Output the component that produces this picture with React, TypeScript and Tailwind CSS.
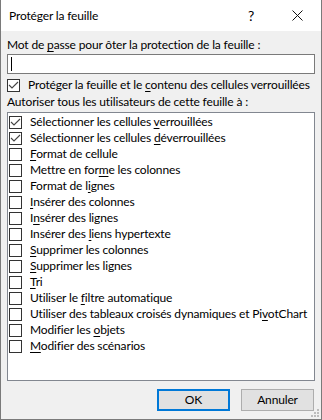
import type { ReactNode } from "react";

type Item = { label: ReactNode; checked?: boolean };

// lettre soulignée (raccourci clavier)
const U = ({ children }: { children: ReactNode }) => <span className="underline underline-offset-[2px]">{children}</span>;

const items: Item[] = [
	{ label: <>Sélectionner les cellules <U>v</U>errouillées</>, checked: true },
	{ label: <>Sélectionner les cellules <U>d</U>éverrouillées</>, checked: true },
	{ label: <><U>F</U>ormat de cellule</> },
	{ label: <>Mettre en for<U>m</U>e les colonnes</> },
	{ label: <>Format de l<U>i</U>gnes</> },
	{ label: <><U>I</U>nsérer des colonnes</> },
	{ label: <>I<U>n</U>sérer des lignes</> },
	{ label: <>Insérer des <U>l</U>iens hypertexte</> },
	{ label: <><U>S</U>upprimer les colonnes</> },
	{ label: <><U>S</U>upprimer les lignes</> },
	{ label: <><U>T</U>ri</> },
	{ label: <>Utiliser le <U>f</U>iltre automatique</> },
	{ label: <>Utiliser des tableaux croisés dynamiques et Pi<U>v</U>otChart</> },
	{ label: <>Modifier les <U>o</U>bjets</> },
	{ label: <><U>M</U>odifier des scénarios</> },
];

function Checkbox({ checked }: { checked?: boolean }) {
	return (
		<span className="flex size-[13px] shrink-0 items-center justify-center border border-[#333333] bg-white">
			{checked && (
				<svg width="11" height="11" viewBox="0 0 11 11">
					<polyline points="1,5 4,8 10,2" fill="none" stroke="#444" strokeWidth="1.1" />
				</svg>
			)}
		</span>
	);
}

export default function App() {
	return (
		<div className="relative flex h-[420px] w-[322px] flex-col overflow-hidden border-x border-b border-[#7a7a7a] bg-[#f0f0f0] font-['Lato',sans-serif] text-[12px] leading-[16px] tracking-[-0.15px] text-black">
			{/* barre de titre */}
			<div className="flex h-[31px] shrink-0 items-center bg-white pl-[8px]">
				<span className="flex-1">Protéger la feuille</span>
				<span className="mr-[38px] text-[14px]">?</span>
				<svg width="11" height="11" viewBox="0 0 11 11" className="mr-[18px]">
					<path d="M0.5 0.5 L10.5 10.5 M10.5 0.5 L0.5 10.5" stroke="#111" strokeWidth="1" />
				</svg>
			</div>

			<div className="flex flex-1 flex-col whitespace-nowrap px-[6px]">
				<p className="mt-[6px]">
					Mot de <U>p</U>asse pour ôter la protection de la feuille :
				</p>
				<div className="mt-[1px] flex h-[20px] shrink-0 items-center border border-[#7a7a7a] bg-white pl-[3px]">
					<span className="h-[14px] w-px bg-black" />
				</div>

				<label className="mt-[3px] flex items-center gap-[8px]">
					<Checkbox checked />
					<span>
						Protéger la feuille et le <U>c</U>ontenu des cellules verrouillées
					</span>
				</label>
				<p className="mt-[1px]">Autoriser tous les utilisateurs de cette feuille à :</p>

				<div className="mt-[2px] h-[269px] shrink-0 border border-[#828790] bg-white pl-[1px] pt-[1px]">
					{items.map((item, i) => (
						<label key={i} className="flex h-[16px] items-center gap-[8px]">
							<Checkbox checked={item.checked} />
							<span>{item.label}</span>
						</label>
					))}
				</div>

				<div className="mt-[8px] flex justify-end gap-[11px] pr-[1px]">
					<button type="button" className="h-[22px] w-[73px] border-2 border-[#0078d7] bg-[#e1e1e1]">
						OK
					</button>
					<button type="button" className="h-[22px] w-[73px] border border-[#adadad] bg-[#e1e1e1]">
						Annuler
					</button>
				</div>
			</div>

			{/* poignée de redimensionnement */}
			<svg width="10" height="10" viewBox="0 0 10 10" className="absolute bottom-[1px] right-[1px]">
				<g fill="#bcbcbc">
					<rect x="7" y="1" width="2" height="2" />
					<rect x="4" y="4" width="2" height="2" />
					<rect x="7" y="4" width="2" height="2" />
					<rect x="1" y="7" width="2" height="2" />
					<rect x="4" y="7" width="2" height="2" />
					<rect x="7" y="7" width="2" height="2" />
				</g>
			</svg>
		</div>
	);
}
